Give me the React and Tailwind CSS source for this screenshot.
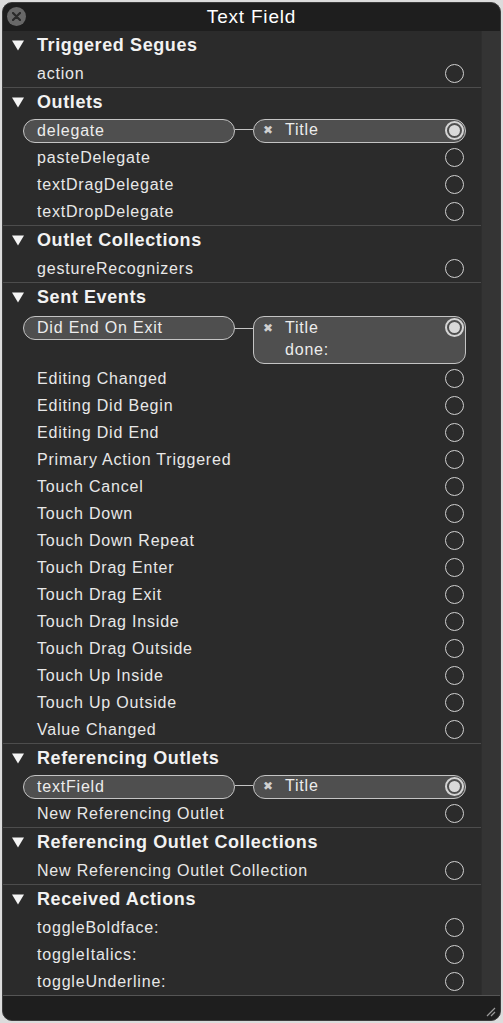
import React from "react";

const font = { fontFamily: '"Liberation Sans", Arial, sans-serif' };

function Circle({ filled }) {
  if (filled) {
    return (
      <div className="flex h-[19px] w-[19px] shrink-0 items-center justify-center rounded-full border-2 border-[#d4d4d4]">
        <div className="h-[11px] w-[11px] rounded-full bg-[#d9d9d9]" />
      </div>
    );
  }
  return <div className="h-[19px] w-[19px] shrink-0 rounded-full border-[1.5px] border-[#cfcfcf]" />;
}

function Header({ title, first }) {
  return (
    <div className={`flex items-center ${first ? "h-[29px]" : "h-[30px] border-t border-[#4d4d4d]"}`}>
      <svg width="12" height="11" viewBox="0 0 12 11" className="ml-[9px]">
        <path d="M0 0.5 H12 L6 10.5 Z" fill="#f5f5f5" />
      </svg>
      <span className="ml-[13px] text-[18px] font-bold tracking-[0.6px] text-[#f2f2f2]">{title}</span>
    </div>
  );
}

function Row({ label }) {
  return (
    <div className="flex h-[27px] items-center justify-between pl-[34px] pr-[17px]">
      <span className="text-[16px] tracking-[0.8px] text-[#e8e8e8]">{label}</span>
      <Circle />
    </div>
  );
}

function Connected({ label, lines, tall }) {
  return (
    <div className={`flex ${tall ? "h-[53px] pt-[4px]" : "h-[27px] items-center"} pl-[20px] pr-[15px]`}>
      <div className="flex h-[24px] w-[212px] shrink-0 items-center rounded-full border-[1.5px] border-[#c4c4c4] bg-[#4f4f4f] pl-[13px] text-[16px] tracking-[0.8px] text-[#ececec]">
        {label}
      </div>
      <div className="mt-[11.5px] h-[1.5px] w-[18px] shrink-0 self-start bg-[#c4c4c4]" />
      <div
        className={`flex flex-1 border-[1.5px] border-[#c4c4c4] bg-[#4f4f4f] text-[16px] tracking-[0.8px] text-[#ececec] ${
          tall ? "h-[48px] rounded-[11px]" : "h-[24px] rounded-full"
        }`}
      >
        <div className="flex flex-1 flex-col pl-[9px]">
          {lines.map((l, i) => (
            <div key={i} className={`flex items-center ${tall ? "h-[22px]" : "h-[21px]"}`}>
              <span className="w-[22px] text-[12px] text-[#d0d0d0]">{i === 0 ? "✖" : ""}</span>
              <span>{l}</span>
            </div>
          ))}
        </div>
        <div className="flex h-[21px] items-center pr-[1px]">
          <Circle filled />
        </div>
      </div>
    </div>
  );
}

const sent = [
  "Editing Changed",
  "Editing Did Begin",
  "Editing Did End",
  "Primary Action Triggered",
  "Touch Cancel",
  "Touch Down",
  "Touch Down Repeat",
  "Touch Drag Enter",
  "Touch Drag Exit",
  "Touch Drag Inside",
  "Touch Drag Outside",
  "Touch Up Inside",
  "Touch Up Outside",
  "Value Changed",
];

export default function App() {
  return (
    <div className="h-[1023px] w-[503px] bg-[#dcdcdc] pt-[2px] pl-[2px]" style={font}>
      <div className="flex h-[1019px] w-[499px] flex-col overflow-hidden rounded-[10px] border border-[#3c3c3c] bg-[#2b2b2b]">
        {/* title bar */}
        <div className="relative flex h-[28px] shrink-0 items-center justify-center bg-[#1e1e1e]">
          <div className="absolute left-[4px] top-[4px] flex h-[19px] w-[19px] items-center justify-center rounded-full bg-[#686868]">
            <svg width="9" height="9" viewBox="0 0 9 9">
              <path d="M1 1 L8 8 M8 1 L1 8" stroke="#2a2a2a" strokeWidth="2.2" strokeLinecap="round" />
            </svg>
          </div>
          <span className="text-[19px] tracking-[0.8px] text-white">Text Field</span>
        </div>

        <div className="flex min-h-0 flex-1">
          <div className="flex-1">
            <Header title="Triggered Segues" first />
            <Row label="action" />

            <Header title="Outlets" />
            <Connected label="delegate" lines={["Title"]} />
            <Row label="pasteDelegate" />
            <Row label="textDragDelegate" />
            <Row label="textDropDelegate" />

            <Header title="Outlet Collections" />
            <Row label="gestureRecognizers" />

            <Header title="Sent Events" />
            <Connected label="Did End On Exit" lines={["Title", "done:"]} tall />
            {sent.map((s) => (
              <Row key={s} label={s} />
            ))}

            <Header title="Referencing Outlets" />
            <Connected label="textField" lines={["Title"]} />
            <Row label="New Referencing Outlet" />

            <Header title="Referencing Outlet Collections" />
            <Row label="New Referencing Outlet Collection" />

            <Header title="Received Actions" />
            <Row label="toggleBoldface:" />
            <Row label="toggleItalics:" />
            <Row label="toggleUnderline:" />
          </div>
          <div className="w-[19px] shrink-0 border-l border-[#2e2e2e] bg-[#343434]" />
        </div>

        {/* footer */}
        <div className="flex h-[25px] shrink-0 items-end justify-end border-t border-[#555] bg-[#1e1e1e] pb-[3px] pr-[4px]">
          <svg width="12" height="12" viewBox="0 0 12 12">
            <path d="M11 3 L3 11 M11 7 L7 11" stroke="#9a9a9a" strokeWidth="1.2" />
          </svg>
        </div>
      </div>
    </div>
  );
}
